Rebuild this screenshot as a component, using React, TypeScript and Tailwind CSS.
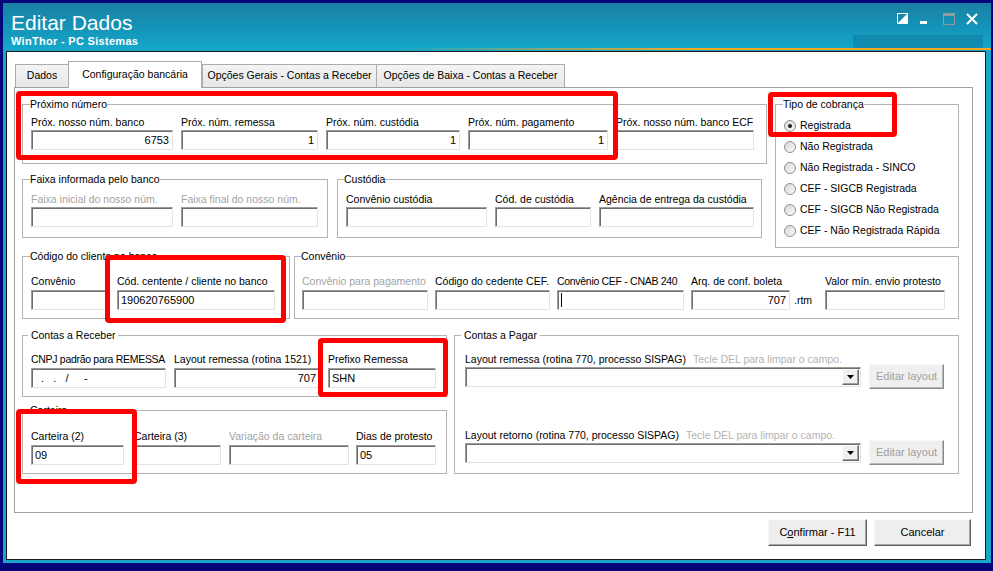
import React from 'react';

type BoxProps = {
  value?: string;
  right?: boolean;
  cursor?: boolean;
  className?: string;
};

function Box({ value, right, cursor, className = '' }: BoxProps) {
  return (
    <div
      className={`h-[20px] bg-white border border-t-[#9c9c9c] border-l-[#9c9c9c] border-r-[#e3e3e3] border-b-[#e3e3e3] shadow-[inset_1px_1px_0_#6e6e6e] flex items-center px-[3px] text-[11px] leading-[18px] text-black whitespace-pre ${right ? 'justify-end' : 'justify-start'} ${className}`}
    >
      {cursor && <span className="w-[1px] h-[14px] bg-black" />}
      {value}
    </div>
  );
}

type FieldProps = {
  label: string;
  w: string;
  value?: string;
  right?: boolean;
  off?: boolean;
  gap?: string;
  className?: string;
  cursor?: boolean;
  tight?: boolean;
};

function Field({ label, w, value, right, off, gap = 'mb-[1px]', className = '', cursor, tight }: FieldProps) {
  return (
    <div className={`flex flex-col shrink-0 ${w} ${className}`}>
      <span
        className={`text-[10.5px] leading-[13px] whitespace-nowrap ${tight ? 'tracking-[-0.3px]' : ''} ${gap} ${off ? 'text-[#a3a3a3]' : 'text-black'}`}
      >
        {label}
      </span>
      <Box value={value} right={right} cursor={cursor} />
    </div>
  );
}

function Group({
  title,
  className = '',
  legend = 'ml-[-1px]',
  children,
}: {
  title: string;
  className?: string;
  legend?: string;
  children: React.ReactNode;
}) {
  return (
    <fieldset className={`border border-[#b4b4b4] shrink-0 ${className}`}>
      <legend className={`text-[10.5px] leading-[13px] text-black whitespace-pre ${legend}`}>{title}</legend>
      {children}
    </fieldset>
  );
}

function Radio({ label, checked }: { label: string; checked?: boolean }) {
  return (
    <div className="flex items-center h-[21px]">
      <span className="w-[12px] h-[12px] rounded-full border border-[#8e8f8f] bg-gradient-to-br from-[#d6d6d6] to-[#fbfbfb] flex items-center justify-center">
        {checked && <span className="w-[4px] h-[4px] rounded-full bg-[#202020]" />}
      </span>
      <span className="ml-[4px] text-[10.5px] leading-[13px] text-black whitespace-nowrap">{label}</span>
    </div>
  );
}

function Combo() {
  return (
    <div className="w-[396px] h-[20px] shrink-0 bg-white border border-t-[#9c9c9c] border-l-[#9c9c9c] border-r-[#e3e3e3] border-b-[#e3e3e3] shadow-[inset_1px_1px_0_#6e6e6e] flex justify-end items-center pr-[1px]">
      <div className="w-[17px] h-[16px] bg-[#f0f0f0] border border-t-white border-l-white border-r-[#696969] border-b-[#696969] shadow-[inset_-1px_-1px_0_#a0a0a0] flex items-center justify-center">
        <svg width="7" height="4" viewBox="0 0 7 4">
          <path d="M0 0h7L3.5 4z" fill="#000" />
        </svg>
      </div>
    </div>
  );
}

function EditButton() {
  return (
    <div className="w-[75px] h-[25px] shrink-0 bg-[#efefef] border border-t-[#f8f8f8] border-l-[#f8f8f8] border-r-[#8a8a8a] border-b-[#8a8a8a] shadow-[inset_-1px_-1px_0_#b9b9b9] flex items-center justify-center text-[11px] text-[#a0a0a0]">
      Editar layout
    </div>
  );
}

function Tab({ label, w, active, className = '' }: { label: string; w: string; active?: boolean; className?: string }) {
  if (active) {
    return (
      <div
        className={`relative z-10 mb-[-1px] h-[27px] border border-b-0 border-[#acacac] bg-white flex items-center justify-center text-[10.5px] text-black ${w} ${className}`}
      >
        {label}
      </div>
    );
  }
  return (
    <div
      className={`h-[23px] border border-b-0 border-[#acacac] bg-gradient-to-b from-[#f4f4f4] to-[#e7e7e7] flex items-center justify-center text-[10.5px] text-black ${w} ${className}`}
    >
      {label}
    </div>
  );
}

function Hint({ label, className = '' }: { label: string; className?: string }) {
  return (
    <div className={`text-[10.5px] leading-[13px] whitespace-nowrap ${className}`}>
      <span className="text-black">{label}</span>
      <span className="ml-[7px] text-[#b3b3b3]">Tecle DEL para limpar o campo.</span>
    </div>
  );
}

export default function App() {
  return (
    <div className="relative w-[993px] h-[571px] bg-[#06067c] overflow-hidden pt-[3px] pl-[3px] font-['Liberation_Sans',Arial,sans-serif]">
      {/* window frame */}
      <div className="w-[988px] h-[560px] bg-[#19a6c8] flex flex-col">
        {/* title bar */}
        <div className="h-[45px] flex justify-between pl-[8px] pr-[13px] bg-[linear-gradient(180deg,#1a80a2_0%,#1494b8_55%,#14a6c8_100%)]">
          <div className="flex flex-col pt-[9px] text-white">
            <span className="text-[21px] leading-[21px]">Editar Dados</span>
            <span className="mt-[2px] text-[11px] leading-[13px] font-bold tracking-[0.3px]">WinThor - PC Sistemas</span>
          </div>
          <div className="flex flex-col items-end">
            <div className="flex items-start pt-[10px]">
              <svg width="11" height="11" viewBox="0 0 11 11">
                <rect x="0.5" y="0.5" width="10" height="10" fill="none" stroke="#fff" />
                <path d="M11 0V11H0z" fill="#fff" />
              </svg>
              <span className="ml-[12px] mt-[8px] w-[7px] h-[3px] bg-white" />
              <svg className="ml-[16px]" width="12" height="12" viewBox="0 0 12 12">
                <rect x="0.5" y="0.5" width="11" height="11" fill="none" stroke="#8d9ba4" />
                <rect x="0" y="0" width="12" height="3" fill="#8d9ba4" />
              </svg>
              <svg className="ml-[11px]" width="12" height="12" viewBox="0 0 12 12">
                <path d="M1 1L11 11M11 1L1 11" stroke="#fff" strokeWidth="2" />
              </svg>
            </div>
            <div className="mt-auto mr-[-5px] w-[130px] h-[13px] bg-[#0b6f91]/40" />
          </div>
        </div>
        <div className="h-[2px] bg-gradient-to-r from-transparent from-40% to-[#f5a623] to-70%" />
        <div className="h-[1px]" />

        {/* client area */}
        <div className="ml-[3px] w-[980px] h-[509px] bg-white border border-[#1a1a1a] flex flex-col">
          {/* tabs */}
          <div className="mt-[9px] h-[26px] pl-[8px] flex items-end">
            <Tab label="Dados" w="w-[54px]" />
            <Tab label="Configuração bancária" w="w-[134px]" active className="-ml-[1px]" />
            <Tab label="Opções Gerais - Contas a Receber" w="w-[175px]" />
            <Tab label="Opções de Baixa - Contas a Receber" w="w-[189px]" className="-ml-[1px]" />
          </div>

          {/* tab page */}
          <div className="ml-[7px] w-[959px] h-[426px] shrink-0 border border-[#a0a0a0] bg-white pt-[10px] pl-[7px] flex flex-col">
            {/* row A */}
            <div className="flex gap-[8px] items-start">
              <div className="w-[745px] flex flex-col">
                <Group title="Próximo número" className="w-[745px] pl-[8px] pt-[5px] pb-[13px]">
                  <div className="flex gap-[8px]">
                    <Field label="Próx. nosso núm. banco" w="w-[142px]" value="6753" right />
                    <Field label="Próx. núm. remessa" w="w-[137px]" value="1" right />
                    <Field label="Próx. núm. custódia" w="w-[134px]" value="1" right />
                    <Field label="Próx. núm. pagamento" w="w-[140px]" value="1" right />
                    <Field label="Próx. nosso núm. banco ECF" w="w-[138px]" />
                  </div>
                </Group>
                <div className="mt-[9px] flex gap-[9px]">
                  <Group title="Faixa informada pelo banco" className="w-[306px] pl-[8px] pt-[7px] pb-[10px]">
                    <div className="flex gap-[8px]">
                      <Field label="Faixa inicial do nosso núm." w="w-[142px]" off />
                      <Field label="Faixa final do nosso núm." w="w-[137px]" off />
                    </div>
                  </Group>
                  <Group title="Custódia" legend="ml-[-2px]" className="w-[425px] pl-[8px] pt-[7px] pb-[10px]">
                    <div className="flex gap-[8px]">
                      <Field label="Convênio custódia" w="w-[141px]" />
                      <Field label="Cód. de custódia" w="w-[96px]" />
                      <Field label="Agência de entrega da custódia" w="w-[155px]" />
                    </div>
                  </Group>
                </div>
              </div>
              <Group title="Tipo de cobrança" className="w-[184px] pl-[8px] pt-[4px] pb-[6px]">
                <Radio label="Registrada" checked />
                <Radio label="Não Registrada" />
                <Radio label="Não Registrada - SINCO" />
                <Radio label="CEF - SIGCB Registrada" />
                <Radio label="CEF - SIGCB Não Registrada" />
                <Radio label="CEF - Não Registrada Rápida" />
              </Group>
            </div>

            {/* row B */}
            <div className="mt-[2px] flex gap-[4px]">
              <Group title="Código do cliente no banco" className="w-[268px] pl-[8px] pt-[12px] pb-[8px]">
                <div className="flex">
                  <Field label="Convênio" w="w-[78px]" gap="mb-[2px]" />
                  <Field label="Cód. centente / cliente no banco" w="w-[158px]" gap="mb-[2px]" value="190620765900" className="ml-[8px]" />
                </div>
              </Group>
              <Group title="Convênio" className="w-[665px] pl-[7px] pt-[12px] pb-[8px]">
                <div className="flex">
                  <Field label="Convênio para pagamento" w="w-[126px]" gap="mb-[2px]" off />
                  <Field label="Código do cedente CEF." w="w-[115px]" gap="mb-[2px]" className="ml-[7px]" />
                  <Field label="Convênio CEF - CNAB 240" w="w-[127px]" gap="mb-[2px]" className="ml-[7px]" cursor tight />
                  <Field label="Arq. de conf. boleta" w="w-[99px]" gap="mb-[2px]" className="ml-[7px]" value="707" right />
                  <span className="self-end ml-[4px] w-[19px] h-[20px] text-[10.5px] leading-[20px] text-black">.rtm</span>
                  <Field label="Valor mín. envio protesto" w="w-[120px]" gap="mb-[2px]" className="ml-[12px]" />
                </div>
              </Group>
            </div>

            {/* row C */}
            <div className="mt-[10px] flex gap-[7px] items-start">
              <div className="w-[425px] flex flex-col">
                <Group title=" Contas a Receber " legend="ml-[-3px]" className="w-[425px] pl-[8px] pt-[11px] pb-[8px]">
                  <div className="flex">
                    <Field label="CNPJ padrão para REMESSA" w="w-[135px]" gap="mb-[2px]" value="  .   .   /     -" tight />
                    <Field label="Layout remessa (rotina 1521)" w="w-[146px]" gap="mb-[2px]" className="ml-[8px]" value="707" right />
                    <Field label="Prefixo Remessa" w="w-[108px]" gap="mb-[2px]" className="ml-[8px]" value="SHN" />
                  </div>
                </Group>
                <Group title="Carteira" className="mt-[7px] w-[425px] pl-[8px] pt-[13px] pb-[8px]">
                  <div className="flex">
                    <Field label="Carteira (2)" w="w-[93px]" gap="mb-[2px]" value="09" />
                    <Field label="Carteira (3)" w="w-[87px]" gap="mb-[2px]" className="ml-[10px]" />
                    <Field label="Variação da carteira" w="w-[120px]" gap="mb-[2px]" className="ml-[8px]" off />
                    <Field label="Dias de protesto" w="w-[80px]" gap="mb-[2px]" className="ml-[7px]" value="05" />
                  </div>
                </Group>
              </div>
              <Group title=" Contas a Pagar " legend="ml-[-4px]" className="w-[505px] pl-[10px] pt-[11px] pb-[8px]">
                <Hint label="Layout remessa (rotina 770, processo SISPAG)" />
                <div className="-mt-[2px] flex items-center gap-[8px]">
                  <Combo />
                  <EditButton />
                </div>
                <Hint label="Layout retorno (rotina 770, processo SISPAG)" className="mt-[40px]" />
                <div className="-mt-[2px] flex items-center gap-[8px]">
                  <Combo />
                  <EditButton />
                </div>
              </Group>
            </div>
          </div>

          {/* dialog buttons */}
          <div className="mt-[6px] flex justify-end gap-[7px] pr-[14px]">
            <div className="w-[99px] h-[27px] bg-[#eeeeee] border border-t-[#fafafa] border-l-[#fafafa] border-r-[#5f5f5f] border-b-[#5f5f5f] shadow-[inset_-1px_-1px_0_#a8a8a8] flex items-center justify-center text-[11px] text-black">
              <span>
                C<span className="underline">o</span>nfirmar - F11
              </span>
            </div>
            <div className="w-[97px] h-[27px] bg-[#eeeeee] border border-t-[#fafafa] border-l-[#fafafa] border-r-[#5f5f5f] border-b-[#5f5f5f] shadow-[inset_-1px_-1px_0_#a8a8a8] flex items-center justify-center text-[11px] text-black">
              Cancelar
            </div>
          </div>
        </div>
      </div>

      {/* red annotation boxes */}
      <div className="absolute left-[16px] top-[91px] w-[602px] h-[69px] border-[5px] border-[#ff0000] rounded-[4px]" />
      <div className="absolute left-[768px] top-[92px] w-[129px] h-[45px] border-[5px] border-[#ff0000] rounded-[4px]" />
      <div className="absolute left-[105px] top-[255px] w-[181px] h-[68px] border-[5px] border-[#ff0000] rounded-[4px]" />
      <div className="absolute left-[318px] top-[338px] w-[130px] h-[59px] border-[5px] border-[#ff0000] rounded-[4px]" />
      <div className="absolute left-[16px] top-[409px] w-[121px] h-[75px] border-[5px] border-[#ff0000] rounded-[4px]" />
    </div>
  );
}
